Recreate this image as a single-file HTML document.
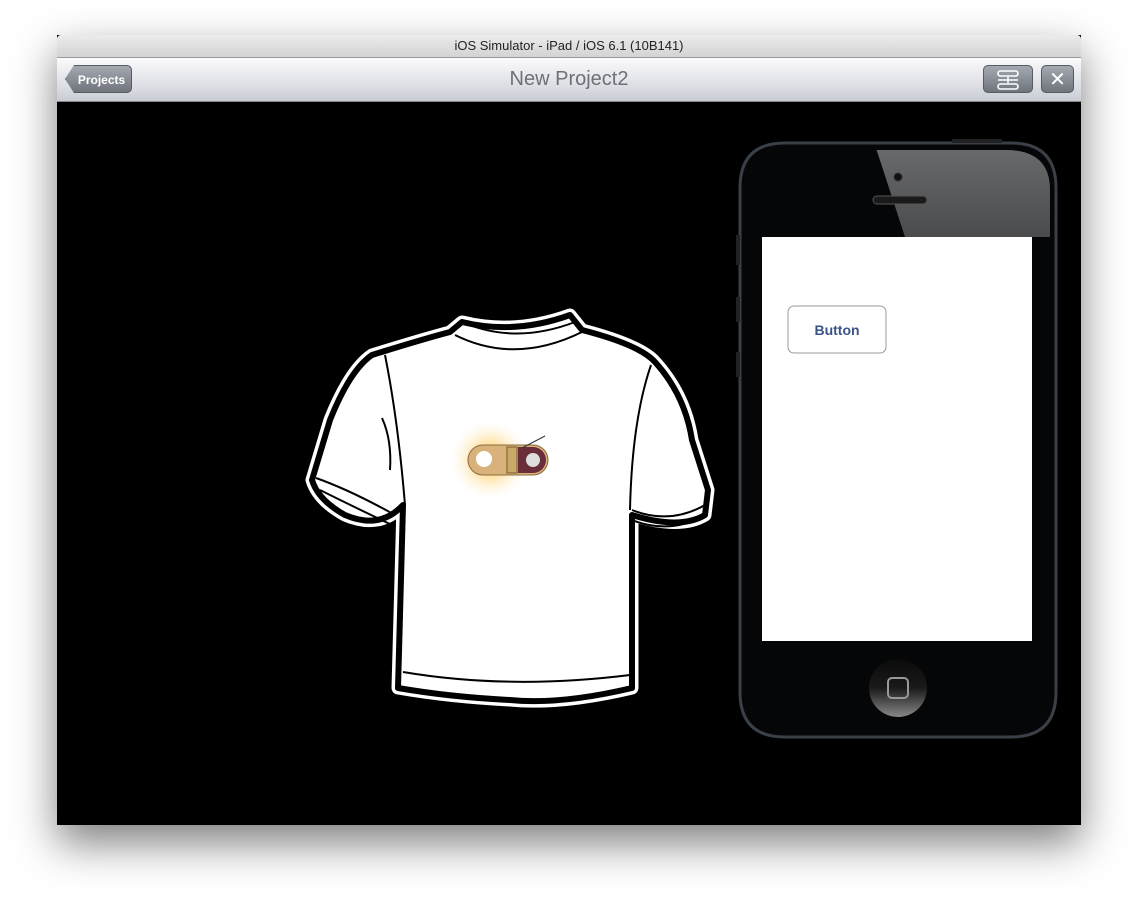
<!DOCTYPE html>
<html><head><style>
body{margin:0;width:1138px;height:904px;background:#fff;position:relative;overflow:hidden;font-family:"Liberation Sans",sans-serif}
.win{position:absolute;left:57px;top:35px;width:1024px;height:790px;box-shadow:0 18px 40px rgba(0,0,0,.5);background:#000}
.title{position:absolute;left:0;top:0;width:1024px;height:22px;background:linear-gradient(#ececec,#d3d3d3);border-bottom:1px solid #999;text-align:center;font-size:13px;line-height:22px;color:#222;border-radius:4px 4px 0 0}
.nav{position:absolute;left:0;top:23px;width:1024px;height:43px;background:linear-gradient(#fbfbfd,#dfe1e6 60%,#c9ccd4);border-bottom:1px solid #888}
.nav h1{margin:0;text-align:center;font-size:20px;font-weight:normal;color:#6d7078;line-height:43px}
.btn{position:absolute;top:7px;height:28px;background:linear-gradient(#a4a8b0,#70747d);border:1px solid #555a63;border-radius:5px;color:#fff;font-size:12px;font-weight:bold;line-height:28px;text-align:center;box-sizing:border-box}
</style></head><body>
<div class="win">
<div class="title">iOS Simulator - iPad / iOS 6.1 (10B141)</div>
<div class="nav"><h1>New Project2</h1>
<div class="btn" style="left:8px;width:67px;clip-path:polygon(9px 0,100% 0,100% 100%,9px 100%,0 50%);padding-left:6px;border-radius:0 5px 5px 0">Projects</div>
<div class="btn" style="left:926px;width:50px"><svg width="30" height="24" viewBox="0 0 30 24" style="margin-top:2px"><g fill="none" stroke="#fff" stroke-width="1.6"><rect x="5" y="3" width="20" height="5" rx="2.5"/><rect x="5" y="16" width="20" height="5" rx="2.5"/><path d="M5 12h20M15 9v6"/></g></svg></div>
<div class="btn" style="left:984px;width:33px;font-size:20px;font-weight:normal">✕</div>
</div>
</div>
<svg style="position:absolute;left:0;top:0" width="1138" height="904">
<defs><radialGradient id="g"><stop offset="0" stop-color="#ffc94a"/><stop offset=".45" stop-color="#ffe1a0" stop-opacity=".8"/><stop offset="1" stop-color="#fff" stop-opacity="0"/></radialGradient>
<linearGradient id="hb" x1="0" y1="0" x2="0" y2="1"><stop offset="0" stop-color="#0a0a0a"/><stop offset=".5" stop-color="#1a1a1a"/><stop offset="1" stop-color="#888"/></linearGradient>
<linearGradient id="gl" x1="0" y1="0" x2="0" y2="1"><stop offset="0" stop-color="#6a6b6d"/><stop offset="1" stop-color="#4a4b4d"/></linearGradient>
<clipPath id="ph"><path d="M745 190 Q745 150 790 150 L1006 150 Q1050 150 1050 190 L1050 690 Q1050 730 1006 730 L790 730 Q745 730 745 690 Z"/></clipPath>
<path id="sh" d="M462 322 Q515 335 570 315 L582 330 Q640 345 655 362 Q685 395 692 440 L708 490 L705 515 Q680 530 632 515 L632 688 Q560 705 510 700 Q450 697 398 688 L403 505 Q380 530 345 515 Q318 500 312 480 L330 420 Q350 370 372 355 Q420 340 450 332 Z"/></defs>
<use href="#sh" fill="#fff" stroke="#fff" stroke-width="13" stroke-linejoin="round"/>
<use href="#sh" fill="#fff" stroke="#000" stroke-width="6" stroke-linejoin="round"/>
<g fill="none" stroke="#000" stroke-width="2">
<path d="M462 322 Q515 345 575 322"/><path d="M455 335 Q515 365 582 332"/>
<path d="M385 355 Q398 420 405 505"/><path d="M651 365 Q632 420 630 510"/>
<path d="M316 478 Q350 490 395 515"/><path d="M320 490 Q350 505 392 525"/>
<path d="M632 510 Q670 525 705 505"/><path d="M632 520 Q670 535 706 515"/>
<path d="M403 672 Q510 690 630 675"/><path d="M382 418 Q392 440 390 470"/>
</g>
<circle cx="490" cy="460" r="42" fill="url(#g)"/>
<rect x="468" y="445" width="80" height="30" rx="15" fill="#d8b27a" stroke="#8a6a3a"/>
<rect x="507" y="447" width="10" height="26" fill="#c9a86a" stroke="#7a5a2a"/>
<path d="M518 447 h15 a13 13 0 0 1 0 26 h-15 Z" fill="#6a2e3a"/>
<circle cx="533" cy="460" r="7" fill="#ddd"/>
<circle cx="484" cy="459" r="8" fill="#fff"/>
<path d="M522 448 L545 436" stroke="#333" stroke-width="1"/>
<path d="M740 188 Q740 143 785 143 L1011 143 Q1056 143 1056 188 L1056 692 Q1056 737 1011 737 L785 737 Q740 737 740 692 Z" fill="#050607" stroke="#3a4048" stroke-width="3"/>
<polygon clip-path="url(#ph)" points="875,145 1060,145 1060,237 905,237" fill="url(#gl)"/>
<rect x="762" y="237" width="270" height="404" fill="#fff"/>
<rect x="788" y="306" width="98" height="47" rx="6" fill="#fff" stroke="#9a9a9a"/>
<text x="837" y="335" text-anchor="middle" font-size="14" font-weight="bold" fill="#3b5386" font-family="Liberation Sans">Button</text>
<circle cx="898" cy="177" r="4" fill="#111" stroke="#333"/>
<rect x="873" y="196" width="54" height="8" rx="4" fill="#1a1a1a" stroke="#555"/>
<circle cx="898" cy="688" r="29" fill="url(#hb)"/>
<rect x="888" y="678" width="20" height="20" rx="4" fill="none" stroke="#999" stroke-width="2"/>
<rect x="736" y="235" width="4" height="30" fill="#222"/><rect x="736" y="297" width="4" height="25" fill="#222"/><rect x="736" y="352" width="4" height="25" fill="#222"/>
<rect x="952" y="139" width="50" height="4" fill="#222"/>
</svg>
</body></html>
